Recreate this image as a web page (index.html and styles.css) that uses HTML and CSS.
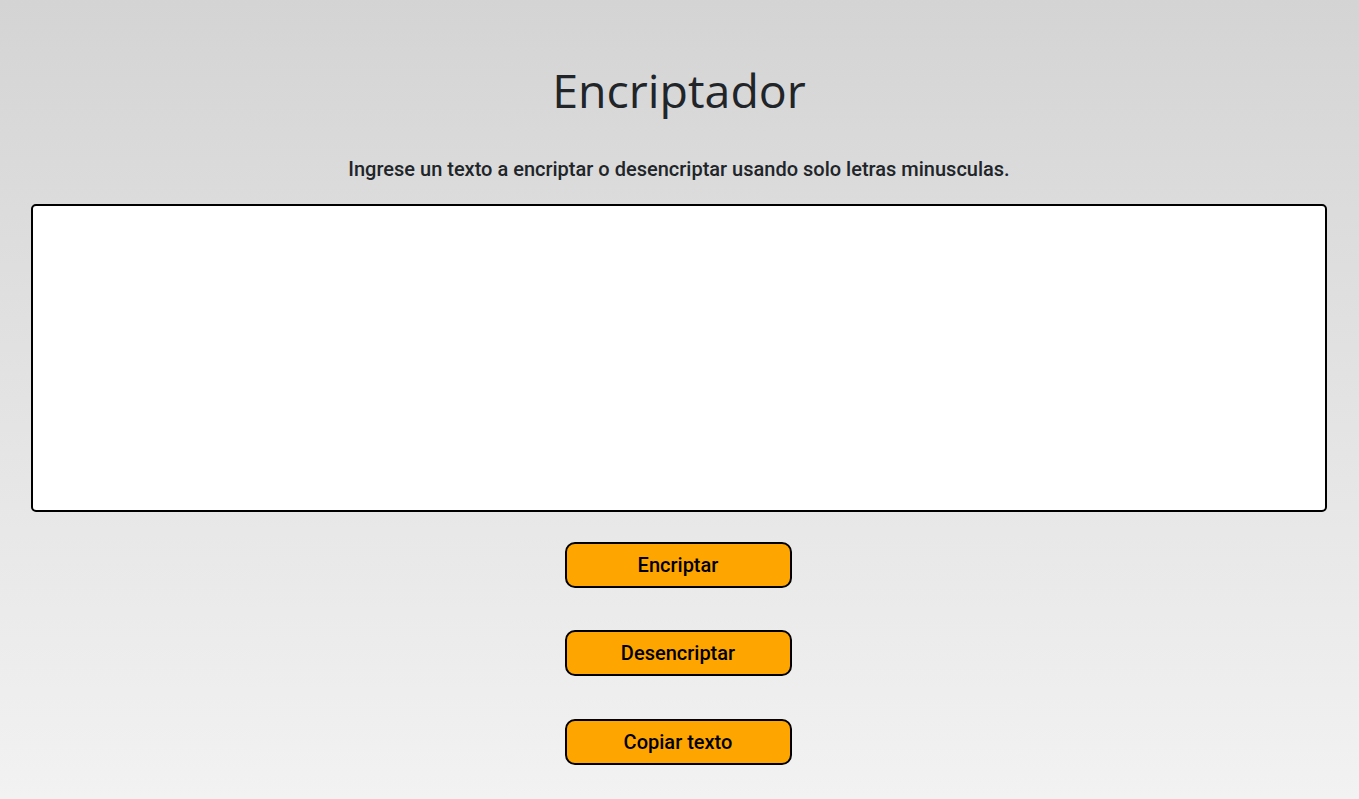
FILE: index.html
```html
<!DOCTYPE html>
<html lang="es">
<head>
<meta charset="utf-8">
<title>Encriptador</title>
<link rel="stylesheet" href="styles.css">
</head>
<body>
<main class="page">
  <h1 class="title">Encriptador</h1>
  <p class="subtitle">Ingrese un texto a encriptar o desencriptar usando solo letras minusculas.</p>
  <textarea class="input" autofocus></textarea>
  <div class="actions">
    <button class="btn" type="button">Encriptar</button>
    <button class="btn" type="button">Desencriptar</button>
    <button class="btn btn-last" type="button">Copiar texto</button>
  </div>
</main>
</body>
</html>
```

FILE: styles.css
```css
html, body {
  margin: 0;
  padding: 0;
  height: 100%;
}
body {
  background: linear-gradient(to bottom, #d4d4d4, #f2f2f2);
  color: #212529;
  font-family: Roboto, "Liberation Sans", sans-serif;
}
.page {
  display: flex;
  flex-direction: column;
  align-items: center;
  padding: 0 32px 0 31px;
  min-height: 799px;
  box-sizing: border-box;
}
.title {
  margin: 59px 0 0;
  font-family: "Open Sans", sans-serif;
  font-weight: 400;
  font-size: 46.5px;
  line-height: 62px;
}
.subtitle {
  margin: 36px 0 0;
  font-weight: 500;
  font-size: 20px;
  line-height: 24px;
}
.input {
  margin-top: 23px;
  width: 100%;
  height: 308px;
  box-sizing: border-box;
  border: 2px solid #000;
  border-radius: 5px;
  background: #fff;
  resize: none;
  outline: none;
  caret-color: #000;
  font-family: Roboto, sans-serif;
  font-size: 16px;
  padding: 2px;
}
.actions {
  margin-top: 30px;
  padding-right: 2px;
  display: flex;
  flex-direction: column;
  gap: 42px;
}
.btn {
  width: 227px;
  height: 46px;
  box-sizing: border-box;
  border: 2px solid #000;
  border-radius: 10px;
  background: #ffa500;
  color: #000;
  font-family: Roboto, sans-serif;
  font-weight: 500;
  font-size: 20px;
  cursor: pointer;
}
.btn-last {
  margin-top: 1px;
}
```
